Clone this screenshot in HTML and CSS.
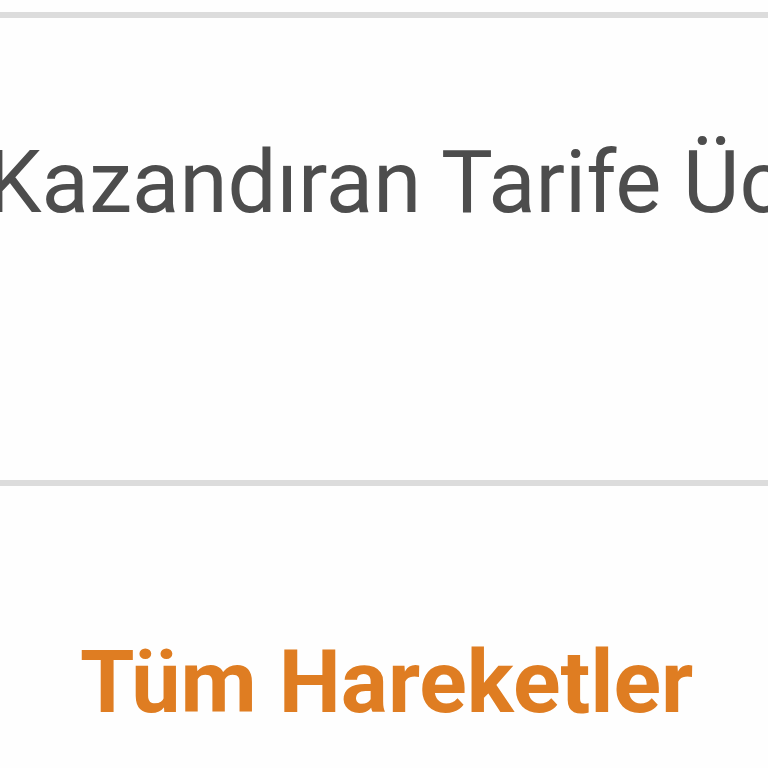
FILE: index.html
```html
<!DOCTYPE html>
<html>
<head>
<meta charset="utf-8">
<link rel="stylesheet" href="styles.css">
</head>
<body>
<div class="page">
  <div class="divider top"></div>
  <div class="row">
    <div class="row-title">Kazandıran Tarife Ücreti</div>
  </div>
  <div class="divider"></div>
  <div class="footer">
    <a class="all-link">Tüm Hareketler</a>
  </div>
</div>
</body>
</html>
```
FILE: styles.css
```css
html, body {
  margin: 0;
  padding: 0;
  background: #fefefe;
  overflow: hidden;
}
.page {
  width: 768px;
  height: 768px;
  overflow: hidden;
  font-family: Roboto, "Noto Sans", sans-serif;
}
.divider {
  height: 6px;
  background: #dcdcdc;
}
.divider.top {
  margin-top: 12px;
}
.row {
  height: 462px;
  box-sizing: border-box;
  padding-top: 114px;
  overflow: hidden;
}
.row-title {
  white-space: nowrap;
  font-size: 87px;
  line-height: 100px;
  color: #4d4d4d;
  margin-left: -13px;
}
.footer {
  padding-top: 146px;
  padding-left: 80px;
}
.all-link {
  font-size: 88px;
  font-weight: bold;
  color: #df7d22;
  line-height: 100px;
}
```
